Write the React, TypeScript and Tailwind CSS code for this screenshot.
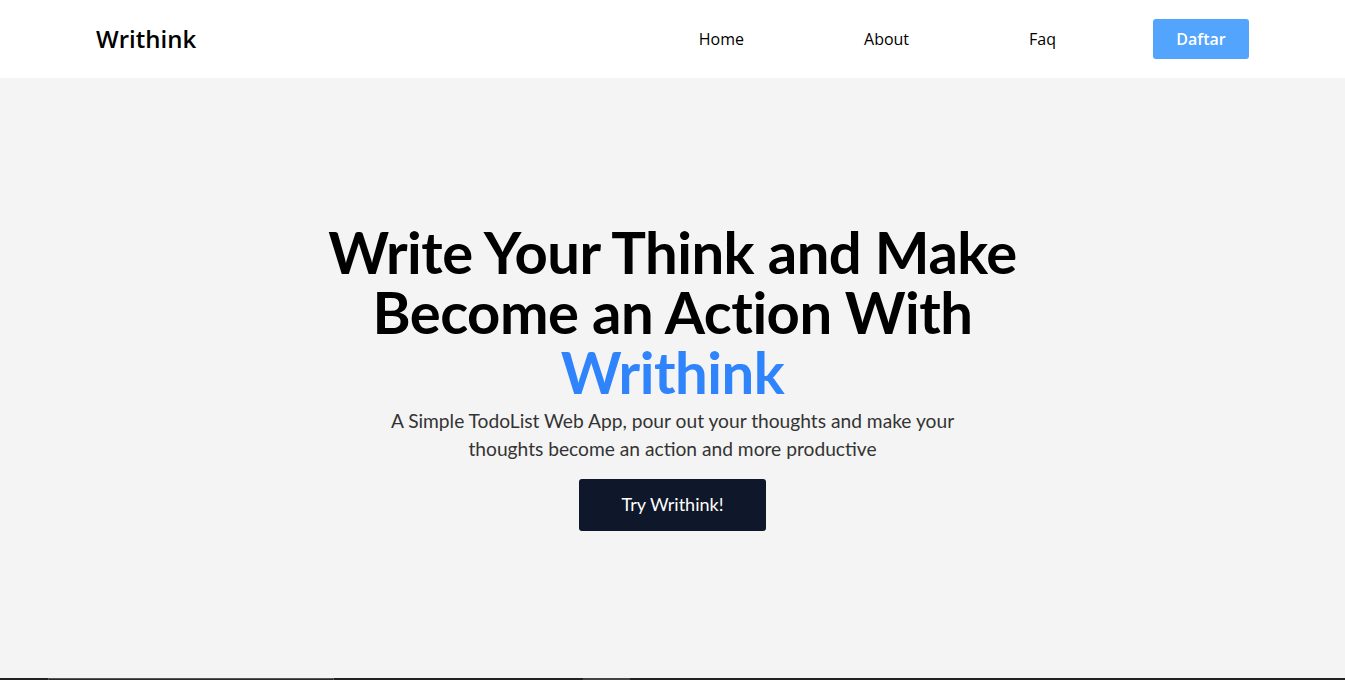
import React from "react";

const links = ["Home", "About", "Faq"];

const App = () => {
  return (
    <div className="min-h-screen bg-[#f4f4f4]">
      <nav className="h-[78px] bg-white flex items-center justify-between pl-[96px] pr-[96px] font-['Open_Sans',sans-serif]">
        <h1 className="text-[24px] font-semibold text-black">Writhink</h1>
        <div className="flex items-center">
          <div className="flex items-center gap-[120px]">
            {links.map((link) => (
              <a key={link} href="#" className="text-[16px] text-black">
                {link}
              </a>
            ))}
          </div>
          <button className="ml-[97px] w-[96px] h-[40px] rounded-[3px] bg-[#52a4fc] text-white text-[16px] font-semibold">
            Daftar
          </button>
        </div>
      </nav>

      <section className="h-[600px] flex flex-col items-center justify-center text-center">
        <h2 className="font-['Lato',sans-serif] font-bold text-[58px] leading-[60px] text-black tracking-[-0.5px] mt-[-4px]">
          Write Your Think and Make
          <br />
          Become an Action With
          <br />
          <span className="text-[#2f84fb]">Writhink</span>
        </h2>
        <p className="font-['Lato',sans-serif] text-[19.2px] leading-[28px] text-[#333] mt-[5px] w-[600px]">
          A Simple TodoList Web App, pour out your thoughts and make your thoughts become an action and more productive
        </p>
        <button className="mt-[16px] w-[187px] h-[52px] rounded-[3px] bg-[#0f172a] text-white font-['Lato',sans-serif] text-[18px]">
          Try Writhink!
        </button>
      </section>

      <section className="h-[300px] bg-[#222] flex items-start">
        <div className="ml-[48px] w-[286px] h-[40px] border-t border-x border-[#555] bg-[#2a2a2a]" />
        <div className="ml-[249px] w-[47px] h-[40px] bg-[#444]" />
      </section>
    </div>
  );
};

export default App;
